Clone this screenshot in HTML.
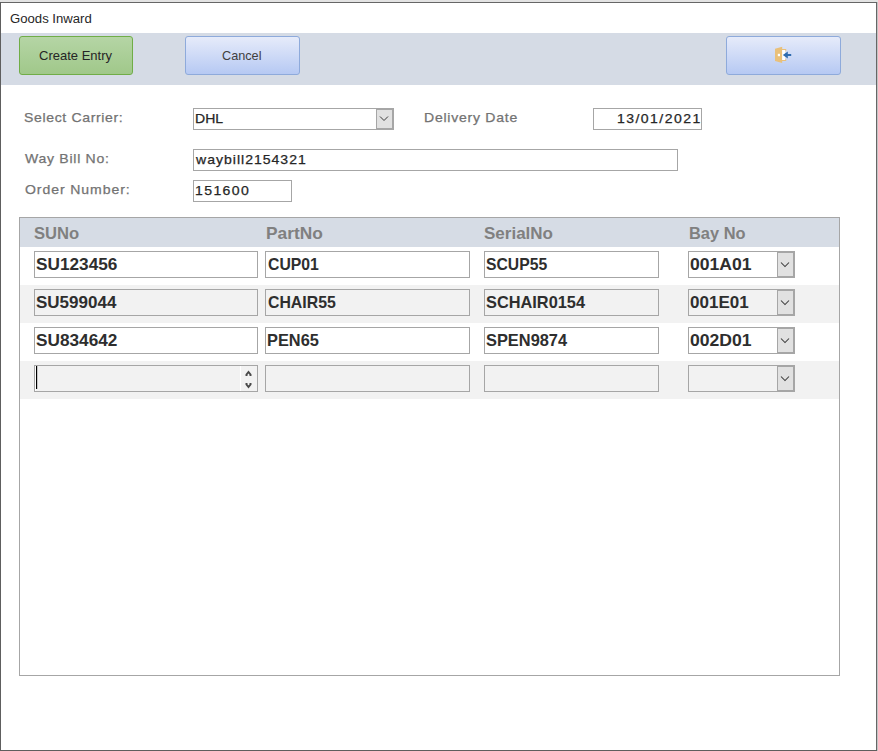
<!DOCTYPE html>
<html><head><meta charset="utf-8">
<style>
html,body{margin:0;padding:0;}
body{width:878px;height:751px;position:relative;overflow:hidden;background:#fff;font-family:"Liberation Sans",sans-serif;}
.a{position:absolute;}
.t{position:absolute;white-space:nowrap;line-height:1;transform-origin:0 0;}
.ttl{font-size:12px;color:#262626;}
.btxt{font-size:13px;color:#262626;}
.btxt2{font-size:13px;color:#404040;}
.lbl{color:#737373;font-size:13px;-webkit-text-stroke:0.25px #737373;}
.val{color:#262626;font-size:13px;-webkit-text-stroke:0.25px #262626;}
.box{position:absolute;border:1px solid #a6a6a6;box-sizing:border-box;background:#fff;}
.g{font-weight:bold;font-size:17px;color:#2e2e2e;}
.h{font-weight:bold;font-size:17px;color:#808080;}
.dd{position:absolute;box-sizing:border-box;background:#e1e1e1;border-left:1px solid #a6a6a6;border-top:1px solid #a6a6a6;border-right:2px solid #a6a6a6;border-bottom:2px solid #a6a6a6;}
.btn{position:absolute;box-sizing:border-box;border-radius:3px;}
</style></head><body>
<!-- window frame -->
<div class="a" style="left:0;top:0;width:878px;height:2px;background:#e3e3e3"></div>
<div class="a" style="left:0;top:2px;width:877px;height:1px;background:#666"></div>
<div class="a" style="left:0;top:2px;width:1px;height:749px;background:#5e5e5e"></div>
<div class="a" style="left:876px;top:2px;width:1px;height:749px;background:#666"></div>
<div class="a" style="left:877px;top:2px;width:1px;height:749px;background:#c4c4c4"></div>
<div class="a" style="left:0;top:750px;width:877px;height:1px;background:#5e5e5e"></div>

<!-- toolbar band -->
<div class="a" style="left:1px;top:33px;width:875px;height:52px;background:#d5dbe5"></div>
<div class="btn" style="left:19px;top:36px;width:114px;height:39px;border:1px solid #70ad47;background:linear-gradient(#b5d5a5,#a0c88a)"></div>
<div class="btn" style="left:185px;top:36px;width:115px;height:39px;border:1px solid #8eaadb;background:linear-gradient(#e6ebfa,#b6c9f3)"></div>
<div class="btn" style="left:726px;top:36px;width:115px;height:39px;border:1px solid #8eaadb;background:linear-gradient(#e6ebfa,#b6c9f3)"></div>
<svg class="a" style="left:772px;top:44px" width="22" height="22" viewBox="0 0 22 22">
<path d="M3 4.8 L10.2 2.8 L10.2 19 L3 17 Z" fill="#e9c07a"/>
<path d="M10 5 L14.2 5 L14.2 7.2 L13.2 7.2 L13.2 6 L10 6 Z M10 17 L14.2 17 L14.2 14.8 L13.2 14.8 L13.2 16 L10 16 Z" fill="#e9c07a"/>
<rect x="10.2" y="6" width="3" height="10" fill="#fff"/>
<rect x="5.8" y="9.8" width="2.2" height="2.4" fill="#fff"/>
<path d="M10.8 11 L15.8 7.6 L15.8 10 L19.2 10 L19.2 12 L15.8 12 L15.8 14.4 Z" fill="#2f6cb0"/>
</svg>

<!-- form fields -->
<div class="box" style="left:193px;top:108px;width:201px;height:22px"></div>
<div class="dd" style="left:376px;top:108px;width:18px;height:22px;border-top-width:2px"></div>
<svg class="a" style="left:379px;top:115px" width="10" height="8"><path d="M1 1.5 L5 5.5 L9 1.5" stroke="#3a3a3a" stroke-width="1" fill="none"/></svg>

<div class="box" style="left:593px;top:108px;width:109px;height:22px"></div>

<div class="box" style="left:193px;top:149px;width:485px;height:22px"></div>

<div class="box" style="left:193px;top:180px;width:99px;height:22px"></div>

<!-- grid -->
<div class="a" style="left:19px;top:217px;width:821px;height:459px;box-sizing:border-box;border:1px solid #a6a6a6;background:#fff"></div>
<div class="a" style="left:20px;top:218px;width:819px;height:29px;background:#d6dce5"></div>

<div class="a" style="left:20px;top:285px;width:819px;height:38px;background:#f2f2f2"></div>
<div class="a" style="left:20px;top:361px;width:819px;height:38px;background:#f2f2f2"></div>

<!-- row1 -->
<div class="box" style="left:34px;top:251px;width:224px;height:27px"></div>
<div class="box" style="left:265px;top:251px;width:205px;height:27px"></div>
<div class="box" style="left:484px;top:251px;width:175px;height:27px"></div>
<div class="box" style="left:688px;top:251px;width:107px;height:27px"></div>
<div class="dd" style="left:777px;top:252px;width:18px;height:26px"></div>
<svg class="a" style="left:780px;top:260px" width="10" height="8"><path d="M1 2.5 L5 6.5 L9 2.5" stroke="#383838" stroke-width="1.05" fill="none"/></svg>

<!-- row2 -->
<div class="box" style="left:34px;top:289px;width:224px;height:27px;background:#f2f2f2"></div>
<div class="box" style="left:265px;top:289px;width:205px;height:27px;background:#f2f2f2"></div>
<div class="box" style="left:484px;top:289px;width:175px;height:27px;background:#f2f2f2"></div>
<div class="box" style="left:688px;top:289px;width:107px;height:27px;background:#f2f2f2"></div>
<div class="dd" style="left:777px;top:290px;width:18px;height:26px"></div>
<svg class="a" style="left:780px;top:298px" width="10" height="8"><path d="M1 2.5 L5 6.5 L9 2.5" stroke="#383838" stroke-width="1.05" fill="none"/></svg>

<!-- row3 -->
<div class="box" style="left:34px;top:327px;width:224px;height:27px"></div>
<div class="box" style="left:265px;top:327px;width:205px;height:27px"></div>
<div class="box" style="left:484px;top:327px;width:175px;height:27px"></div>
<div class="box" style="left:688px;top:327px;width:107px;height:27px"></div>
<div class="dd" style="left:777px;top:328px;width:18px;height:26px"></div>
<svg class="a" style="left:780px;top:336px" width="10" height="8"><path d="M1 2.5 L5 6.5 L9 2.5" stroke="#383838" stroke-width="1.05" fill="none"/></svg>

<!-- row4 -->
<div class="box" style="left:34px;top:365px;width:224px;height:27px;background:#f2f2f2"></div>
<div class="a" style="left:35px;top:366px;width:1px;height:25px;background:#fff"></div>
<div class="a" style="left:36px;top:366px;width:1px;height:23px;background:#000"></div>
<div class="a" style="left:37px;top:366px;width:1px;height:23px;background:#c8c8c8"></div>
<div class="a" style="left:240px;top:366px;width:1px;height:25px;background:#fff"></div>
<svg class="a" style="left:243px;top:368px" width="12" height="23"><path d="M3.5 8 L3.5 6.5 L5.5 4 L7.5 6.5 L7.5 8 M3.5 15 L3.5 16.5 L5.5 19 L7.5 16.5 L7.5 15" stroke="#4a4a4a" stroke-width="2" stroke-linejoin="miter" fill="none"/></svg>
<div class="box" style="left:265px;top:365px;width:205px;height:27px;background:#f2f2f2"></div>
<div class="box" style="left:484px;top:365px;width:175px;height:27px;background:#f2f2f2"></div>
<div class="box" style="left:688px;top:365px;width:107px;height:27px;background:#f2f2f2"></div>
<div class="dd" style="left:777px;top:366px;width:18px;height:26px"></div>
<svg class="a" style="left:780px;top:374px" width="10" height="8"><path d="M1 2.5 L5 6.5 L9 2.5" stroke="#383838" stroke-width="1.05" fill="none"/></svg>
<div class="t ttl" style="left:10px;top:13px;transform:scaleX(1.0946);">Goods Inward</div>
<div class="t btxt" style="left:39px;top:49px;">Create Entry</div>
<div class="t btxt2" style="left:222px;top:49px;transform:scaleX(0.9750);">Cancel</div>
<div class="t lbl" style="left:24px;top:111px;transform:scaleX(1.0800);letter-spacing:0.595px;">Select Carrier:</div>
<div class="t val" style="left:195px;top:112px;transform:scaleX(1.0800);">DHL</div>
<div class="t lbl" style="left:424px;top:111px;transform:scaleX(1.0800);letter-spacing:0.694px;">Delivery Date</div>
<div class="t val" style="left:617px;top:112px;transform:scaleX(1.0800);letter-spacing:1.337px;">13/01/2021</div>
<div class="t lbl" style="left:25px;top:152px;transform:scaleX(1.0800);letter-spacing:0.673px;">Way Bill No:</div>
<div class="t val" style="left:196px;top:153px;transform:scaleX(1.0800);letter-spacing:0.926px;">waybill2154321</div>
<div class="t lbl" style="left:25px;top:183px;transform:scaleX(1.0800);letter-spacing:0.849px;">Order Number:</div>
<div class="t val" style="left:195px;top:184px;transform:scaleX(1.0800);letter-spacing:1.296px;">151600</div>
<div class="t h" style="left:34px;top:225px;transform:scaleX(0.9778);">SUNo</div>
<div class="t h" style="left:266px;top:225px;transform:scaleX(1.0185);">PartNo</div>
<div class="t h" style="left:484px;top:225px;transform:scaleX(1.0004);">SerialNo</div>
<div class="t h" style="left:689px;top:225px;transform:scaleX(0.9649);">Bay No</div>
<div class="t g" style="left:36px;top:256px;transform:scaleX(1.0125);">SU123456</div>
<div class="t g" style="left:268px;top:256px;transform:scaleX(0.9273);">CUP01</div>
<div class="t g" style="left:486px;top:256px;transform:scaleX(0.9242);">SCUP55</div>
<div class="t g" style="left:690px;top:256px;transform:scaleX(1.0344);">001A01</div>
<div class="t g" style="left:36px;top:294px;">SU599044</div>
<div class="t g" style="left:268px;top:294px;transform:scaleX(0.9315);">CHAIR55</div>
<div class="t g" style="left:486px;top:294px;transform:scaleX(0.9612);">SCHAIR0154</div>
<div class="t g" style="left:690px;top:294px;transform:scaleX(1.0006);">001E01</div>
<div class="t g" style="left:36px;top:332px;transform:scaleX(1.0125);">SU834642</div>
<div class="t g" style="left:267px;top:332px;transform:scaleX(0.9623);">PEN65</div>
<div class="t g" style="left:486px;top:332px;transform:scaleX(0.9643);">SPEN9874</div>
<div class="t g" style="left:690px;top:332px;transform:scaleX(1.0344);">002D01</div>
</body></html>
